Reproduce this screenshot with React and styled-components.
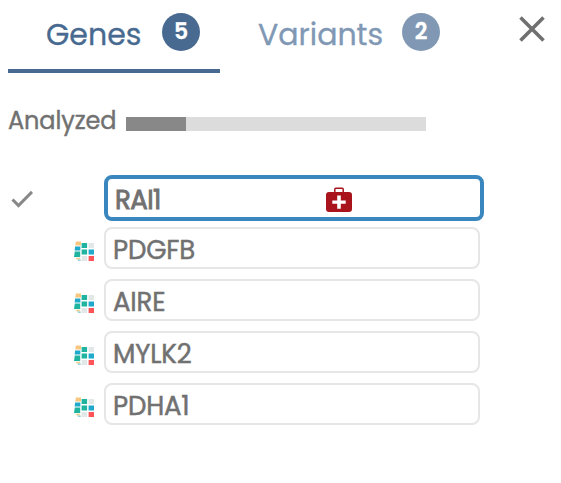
import React from "react";
import styled, { createGlobalStyle } from "styled-components";

const GlobalStyle = createGlobalStyle`
  * { box-sizing: border-box; }
  body {
    margin: 0;
    background: #fff;
    color: #717171;
    font-family: Poppins, Inter, "Open Sans", sans-serif;
  }
`;

const Panel = styled.main`
  width: 561px;
  height: 483px;
  padding: 0 8px;
  overflow: hidden;
`;

const Header = styled.header`
  display: flex;
  height: 73px;
`;

const Tab = styled.div`
  display: flex;
  flex: none;
  width: 212px;
  height: 73px;
  padding-left: 38px;
  border-bottom: 4px solid ${(p) => (p.$active ? "#486a90" : "transparent")};
  color: ${(p) => (p.$active ? "#486a90" : "#8098b4")};
`;

const TabLabel = styled.span`
  width: ${(p) => p.$width}px;
  flex: none;
  line-height: 70px;
  font-size: 30px;
  white-space: nowrap;
  -webkit-text-stroke: 0.3px currentColor;
`;

const Badge = styled.span`
  display: flex;
  align-items: center;
  justify-content: center;
  flex: none;
  width: 38px;
  height: 38px;
  margin-top: 13px;
  border-radius: 50%;
  background: ${(p) => (p.$active ? "#486a90" : "#8098b4")};
  color: #fff;
  font-size: 22px;
  font-weight: 600;
  line-height: 1;
  -webkit-text-stroke: 0.3px currentColor;
`;

const CloseButton = styled.button`
  display: block;
  flex: none;
  width: 26px;
  height: 26px;
  margin: 16px 0 0 87px;
  padding: 0;
  border: 0;
  background: none;
`;

const Progress = styled.section`
  display: flex;
  align-items: center;
  height: 34px;
  margin-top: 31px;
`;

const ProgressLabel = styled.span`
  width: 118px;
  font-size: 24px;
  line-height: 34px;
  letter-spacing: -0.1px;
  -webkit-text-stroke: 0.4px currentColor;
`;

const Track = styled.div`
  width: 300px;
  height: 14px;
  margin-top: 6px;
  background: #dcdcdc;
`;

const Fill = styled.div`
  width: 20%;
  height: 100%;
  background: #888;
`;

const GeneList = styled.ul`
  margin: 37px 0 0;
  padding: 0;
  list-style: none;
`;

const GeneRow = styled.li`
  display: flex;
  align-items: center;
  height: ${(p) => (p.$selected ? 46 : 42)}px;
  margin-bottom: ${(p) => (p.$selected ? 6 : 10)}px;
`;

const Status = styled.span`
  display: flex;
  flex: none;
  width: 96px;
  padding-left: ${(p) => (p.$selected ? 3 : 65.5)}px;
  padding-top: ${(p) => (p.$selected ? 2 : 6)}px;
`;

const GeneBox = styled.div`
  display: flex;
  align-items: center;
  width: ${(p) => (p.$selected ? 380 : 376)}px;
  height: 100%;
  padding-left: 7px;
  border: ${(p) => (p.$selected ? "4px solid #3a86bf" : "2px solid #e6e6e6")};
  border-radius: 8px;
`;

const GeneName = styled.span`
  width: 211px;
  padding-top: 3px;
  font-size: 26px;
  line-height: 30px;
  letter-spacing: ${(p) => (p.$selected ? -0.6 : -0.15)}px;
  -webkit-text-stroke: ${(p) => (p.$selected ? 0.9 : 0.5)}px currentColor;
`;

const Icon = styled.svg`
  display: block;
  flex: none;
`;

const KitIcon = styled(Icon)`
  margin-top: 2px;
`;

function Close() {
  return (
    <Icon width="26" height="26" viewBox="0 0 26 26">
      <path d="M1.5 1.5 24.5 24.5M24.5 1.5 1.5 24.5" fill="none" stroke="#707070" strokeWidth="3.6" />
    </Icon>
  );
}

function Check() {
  return (
    <Icon width="22" height="18" viewBox="0 0 22 18">
      <path d="m1.5 9.5 6 6L21 1.9" fill="none" stroke="#888" strokeWidth="3" />
    </Icon>
  );
}

function FirstAidKit() {
  return (
    <KitIcon width="26" height="25" viewBox="0 0 26 25">
      <path d="M8.8 6V2.2Q8.8 1.2 9.8 1.2h6.4Q17.2 1.2 17.2 2.2V6" fill="none" stroke="#a9141c" strokeWidth="1.5" />
      <rect y="5" width="26" height="20" rx="3" fill="#a9141c" />
      <path d="M11.2 8.5h3.6v5h4.9v3.3h-4.9v5h-3.6v-5H6.3v-3.3h4.9z" fill="#fff" />
    </KitIcon>
  );
}

function PanelIcon() {
  return (
    <Icon width="21" height="21" viewBox="0 0 21 21">
      <path d="M2 .5h5v4H1.2z" fill="#f7c77f" />
      <path d="M1.1 5.5h5.3v4H.6z" fill="#1fa9cd" />
      <path d="M.8 10.5h5.4V16H0z" fill="#1eb4a0" />
      <path d="M1.2 16.7h5v1.8H3z" fill="#f4cf8f" />
      <path d="M3 18.5h3.7V20H4.5z" fill="#91d4df" />
      <path d="M7.6 2h5.5v5H7.6zM7.6 8.5h5.5v5H7.6z" fill="#1eb4a0" />
      <path d="M14.6 2H20v5h-5.4zM7.6 15h5.5v5H7.6z" fill="#e2e7e7" />
      <path d="M14.6 8.5H20v5h-5.4z" fill="#1fa9cd" />
      <path d="M14.6 15H20v5h-5.4z" fill="#ff5558" />
    </Icon>
  );
}

const genes = [
  { name: "RAI1", selected: true },
  { name: "PDGFB" },
  { name: "AIRE" },
  { name: "MYLK2" },
  { name: "PDHA1" },
];

export default function App() {
  return (
    <>
      <GlobalStyle />
      <Panel>
        <Header>
          <Tab $active>
            <TabLabel $width={116}>Genes</TabLabel>
            <Badge $active>5</Badge>
          </Tab>
          <Tab>
            <TabLabel $width={144}>Variants</TabLabel>
            <Badge>2</Badge>
          </Tab>
          <CloseButton aria-label="Close">
            <Close />
          </CloseButton>
        </Header>
        <Progress>
          <ProgressLabel>Analyzed</ProgressLabel>
          <Track>
            <Fill />
          </Track>
        </Progress>
        <GeneList>
          {genes.map((gene) => (
            <GeneRow key={gene.name} $selected={gene.selected}>
              <Status $selected={gene.selected}>
                {gene.selected ? <Check /> : <PanelIcon />}
              </Status>
              <GeneBox $selected={gene.selected}>
                <GeneName $selected={gene.selected}>{gene.name}</GeneName>
                {gene.selected && <FirstAidKit />}
              </GeneBox>
            </GeneRow>
          ))}
        </GeneList>
      </Panel>
    </>
  );
}
